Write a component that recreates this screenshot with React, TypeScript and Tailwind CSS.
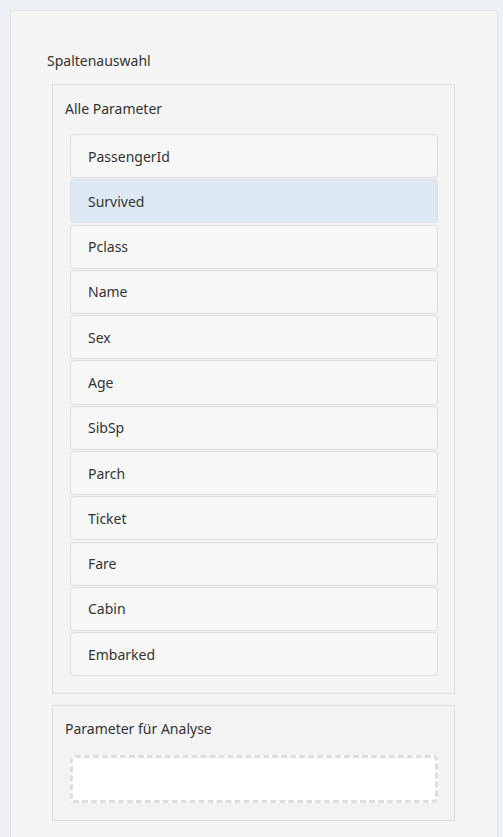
const columns = [
  "PassengerId",
  "Survived",
  "Pclass",
  "Name",
  "Sex",
  "Age",
  "SibSp",
  "Parch",
  "Ticket",
  "Fare",
  "Cabin",
  "Embarked",
];

const selected = "Survived";

export default function App() {
  return (
    <div className="min-h-[837px] bg-[#edf0f5] pl-[10px] pr-[5px] pt-[10px] font-['Noto_Sans',sans-serif] text-[14px] text-[#333]">
      <div className="min-h-[827px] rounded-t-[4px] border border-b-0 border-[#e3e3e3] bg-[#f5f5f5] pl-[36px] pr-[42px] pt-[40px]">
        <p className="leading-[20px]">Spaltenauswahl</p>

        <section className="ml-[5px] mt-[13px] border border-[#dcdcdc] bg-[#f4f4f4] pb-[17px] pl-[17px] pr-[16px] pt-[14px]">
          <h2 className="-ml-[5px] leading-[20px]">Alle Parameter</h2>
          <ul className="mt-[15px] flex flex-col gap-[1.2px]">
            {columns.map((c) => (
              <li
                key={c}
                className={
                  "flex h-[44.1px] items-center rounded-[4px] border border-[#dedede] pl-[17px] " +
                  (c === selected ? "bg-[#dde9f5]" : "bg-[#f7f7f7]")
                }
              >
                {c}
              </li>
            ))}
          </ul>
        </section>

        <section className="ml-[5px] mt-[11px] border border-[#dcdcdc] bg-[#f3f3f3] pb-[17px] pl-[17px] pr-[16px] pt-[13px]">
          <h2 className="-ml-[5px] leading-[20px]">Parameter für Analyse</h2>
          <div className="mt-[16px] h-[48px] rounded-[5px] border-[3px] border-dashed border-[#dedede] bg-white" />
        </section>
      </div>
    </div>
  );
}
